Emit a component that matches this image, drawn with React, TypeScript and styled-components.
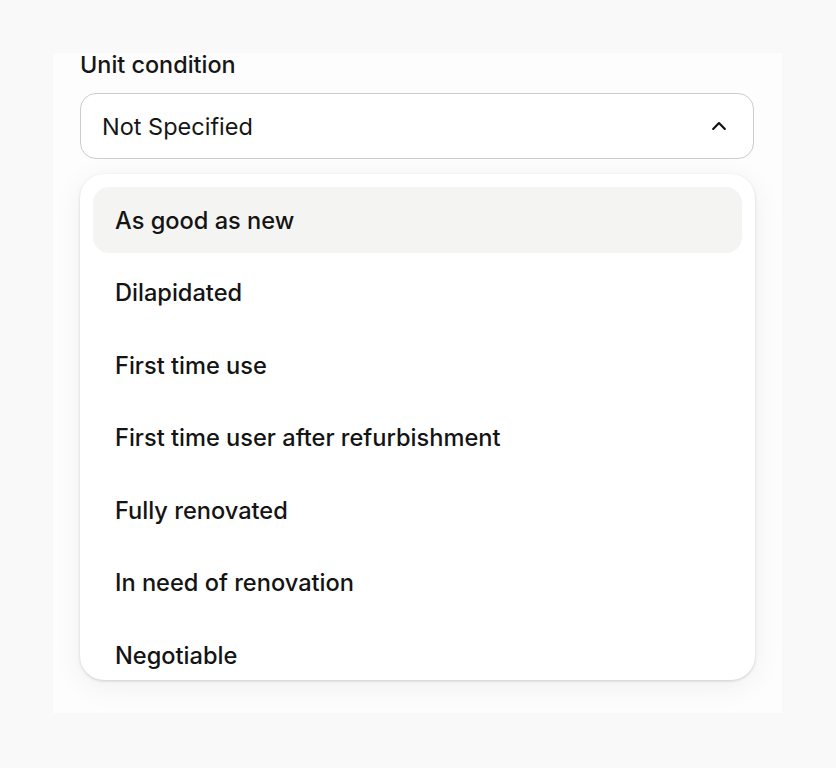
import React from "react";
import styled, { createGlobalStyle } from "styled-components";

const Global = createGlobalStyle`
  html, body { margin: 0; padding: 0; background: #f9f9f9; }
  body { font-family: Inter, "Noto Sans", "Liberation Sans", sans-serif; color: #141414; }
  * { box-sizing: border-box; }
`;

const Page = styled.div`
  width: 836px;
  height: 768px;
  padding: 53px 54px 0 53px;
`;

const Panel = styled.div`
  width: 729px;
  height: 660px;
  background: #fdfdfd;
  padding: 0 28px 0 27px;
  display: flex;
  flex-direction: column;
`;

const Label = styled.div`
  font-size: 23.4px;
  font-weight: 500;
  line-height: 24px;
  height: 24px;
  color: #161616;
`;

const Trigger = styled.div`
  margin-top: 16px;
  height: 66px;
  border: 1.5px solid #cdcdcd;
  border-radius: 16px;
  background: #fff;
  display: flex;
  align-items: center;
  justify-content: space-between;
  padding: 0 24px 0 21px;
  font-size: 23.5px;
  color: #161616;
`;

const Menu = styled.div`
  margin-top: 15px;
  width: 675px;
  height: 506px;
  background: #fff;
  border-radius: 24px;
  padding: 13px 13px 0 13px;
  overflow: hidden;
  display: flex;
  flex-direction: column;
  gap: 6.5px;
  box-shadow: 0 1px 3px rgba(0, 0, 0, 0.16), 0 6px 30px rgba(0, 0, 0, 0.06);
`;

const Item = styled.div<{ $active?: boolean }>`
  flex: 0 0 66px;
  height: 66px;
  border-radius: 16px;
  display: flex;
  align-items: center;
  padding-left: 22px;
  font-size: 23.6px;
  font-weight: 500;
  color: #141414;
  background: ${(p) => (p.$active ? "#f4f4f3" : "transparent")};
`;

const options = [
  "As good as new",
  "Dilapidated",
  "First time use",
  "First time user after refurbishment",
  "Fully renovated",
  "In need of renovation",
  "Negotiable",
];

const Chevron = () => (
  <svg width="20" height="20" viewBox="0 0 24 24" fill="none" stroke="#111" strokeWidth="2.6" strokeLinecap="round" strokeLinejoin="round">
    <polyline points="5 15.5 12 8.5 19 15.5" />
  </svg>
);

export default function App() {
  return (
    <Page>
      <Global />
      <Panel>
        <Label>Unit condition</Label>
        <Trigger>
          <span>Not Specified</span>
          <Chevron />
        </Trigger>
        <Menu>
          {options.map((o, i) => (
            <Item key={o} $active={i === 0}>
              {o}
            </Item>
          ))}
        </Menu>
      </Panel>
    </Page>
  );
}
